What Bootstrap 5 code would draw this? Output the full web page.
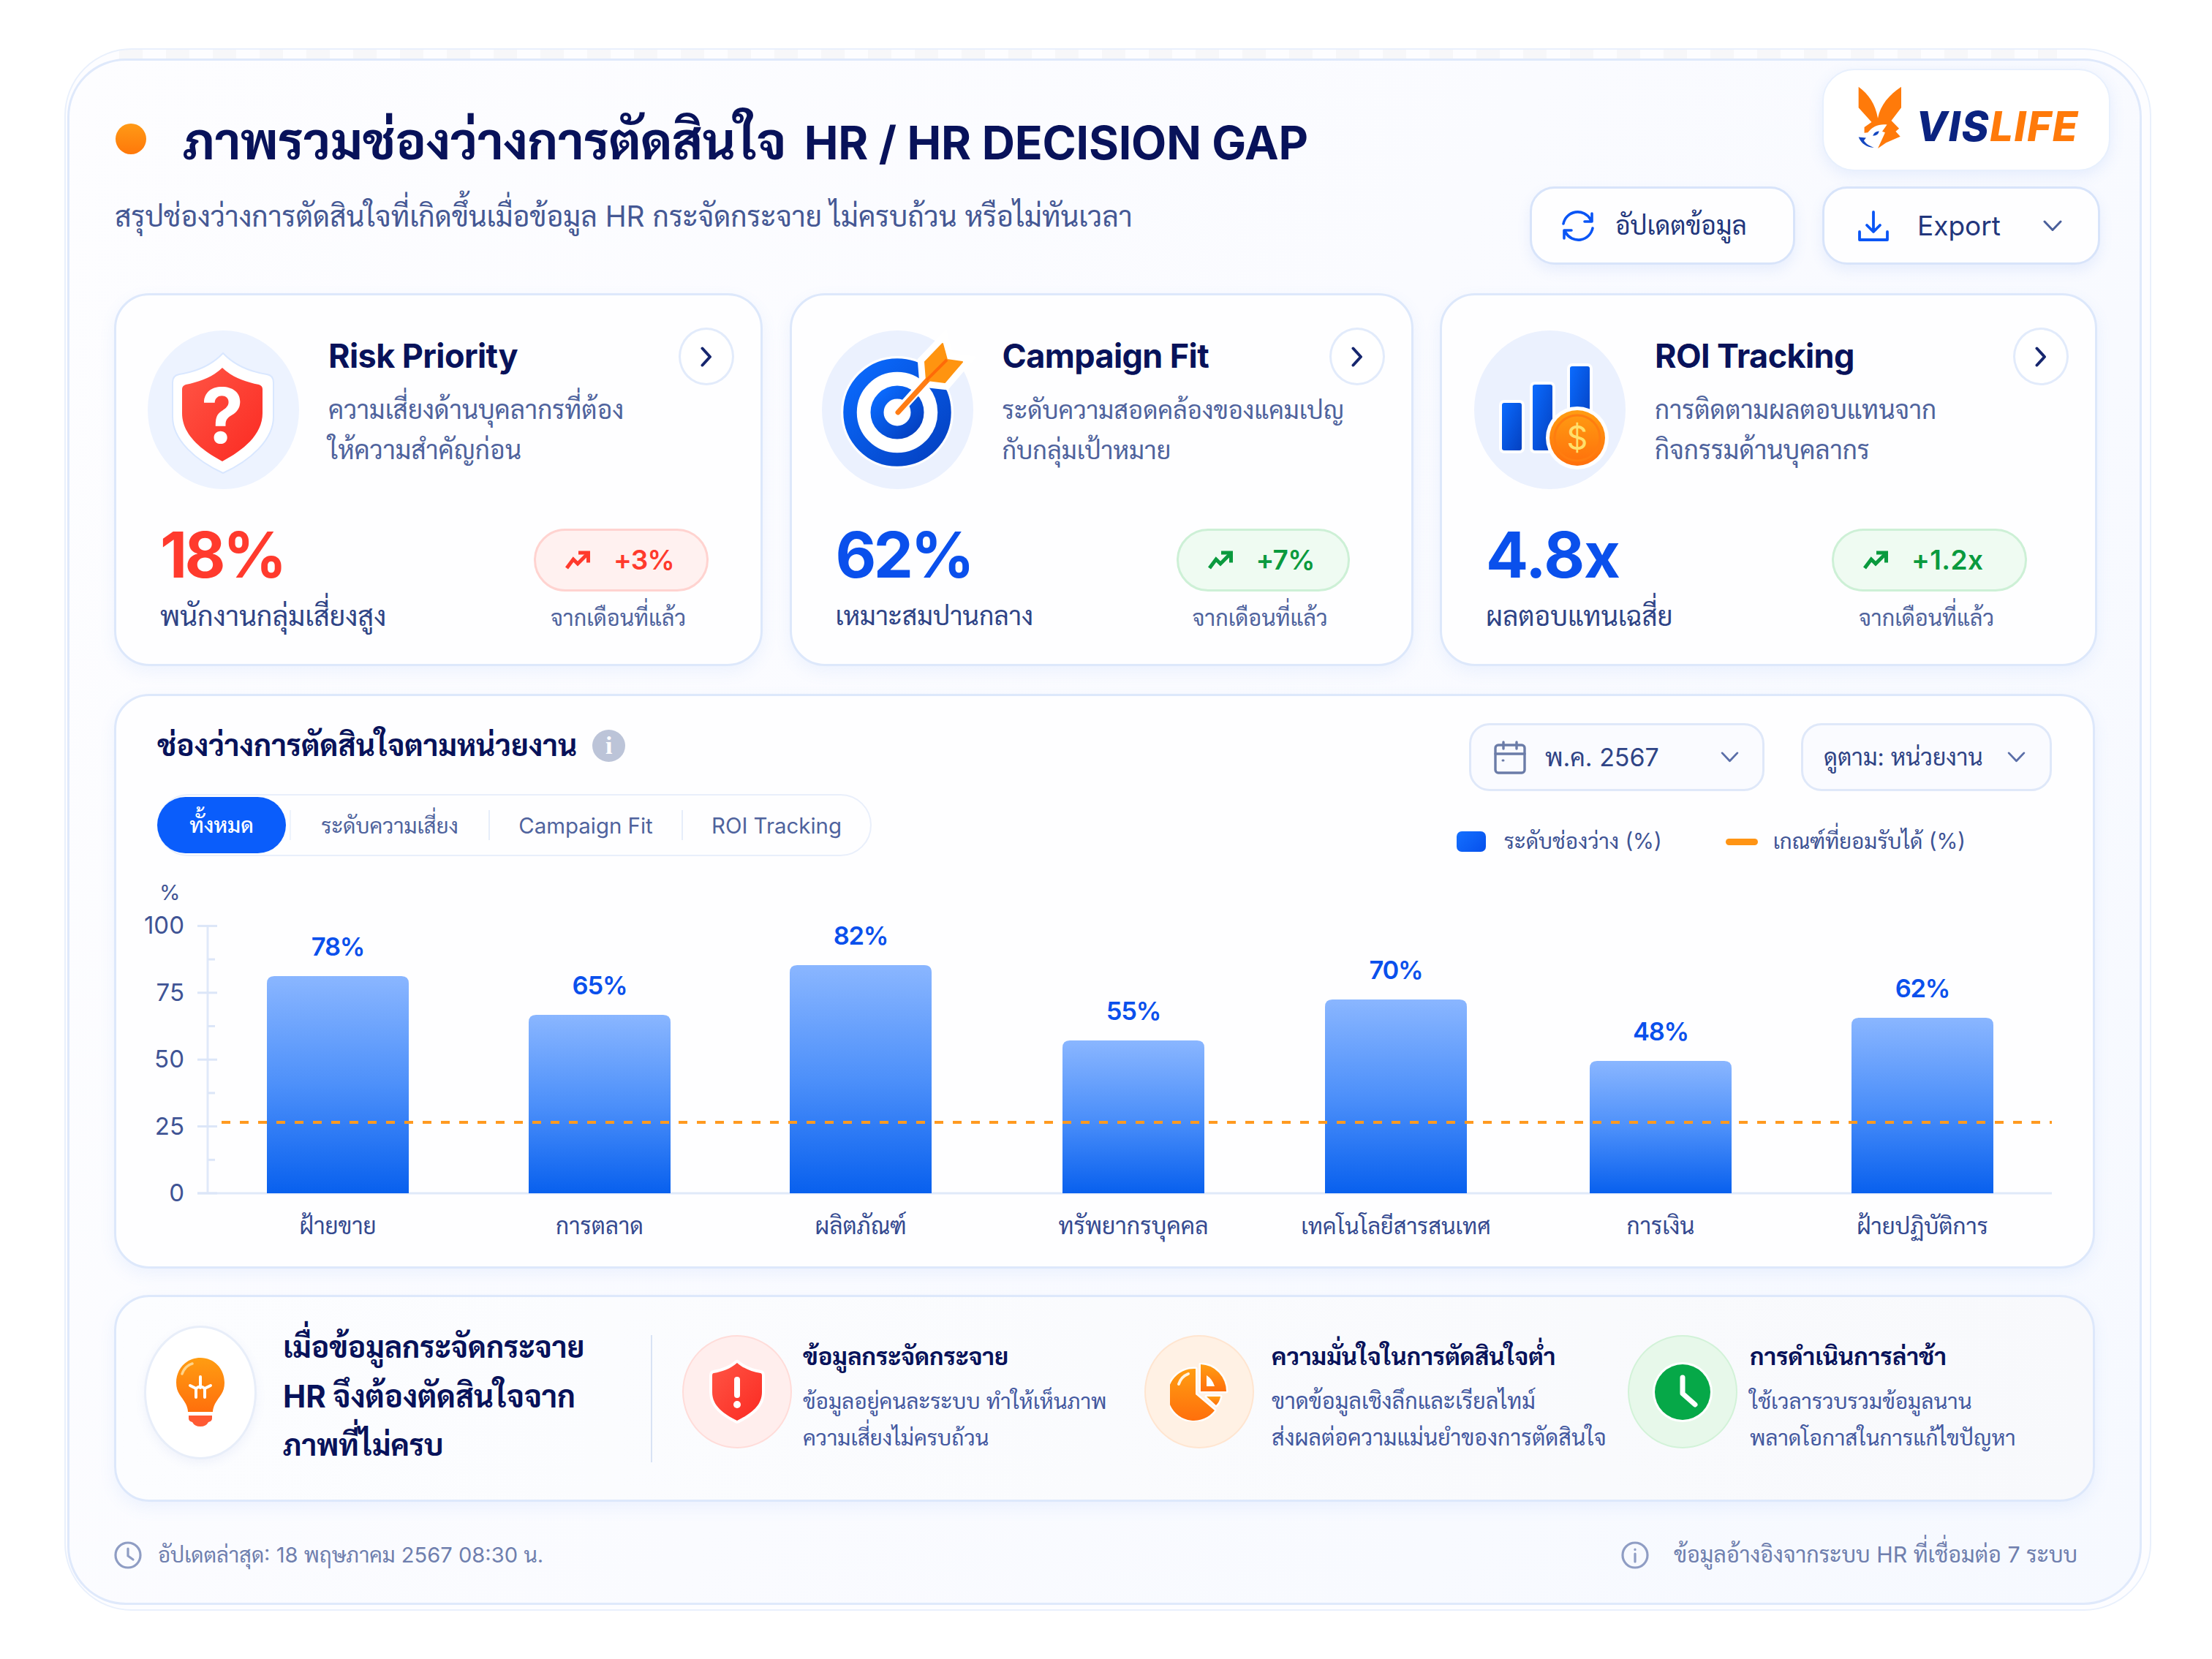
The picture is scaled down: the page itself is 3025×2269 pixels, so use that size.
<!DOCTYPE html>
<html lang="th">

<head>
    <meta charset="UTF-8">
    <title>HR Decision Gap</title>
    <link href="https://cdn.jsdelivr.net/npm/bootstrap@5.3.0/dist/css/bootstrap.min.css" rel="stylesheet">
    <style>
        :root {
            --navy: #08125a;
            --ink: #2f4486;
            --soft: #4f639d;
            --line: #dde8fb;
            --blue: #0a50ec;
            --red: #ff3a2d;
            --green: #0a9a3e;
        }

        body {
            font-family: Inter, Sarabun, "Noto Sans", sans-serif;
            background: #fff;
            color: var(--ink);
            width: 3025px;
            height: 2269px;
            padding: 66px 83px 66px 88px;
            overflow: hidden;
        }

        .text-navy { color: var(--navy); }
        .text-blue { color: var(--blue); }
        .text-red { color: var(--red); }
        .text-nowrap-all, .text-nowrap-all * { white-space: nowrap; }

        /* Frame */
        .frame-outer {
            height: 2137px;
            border: 2px solid #e9f0fc;
            border-radius: 92px;
            padding: 12px 11px 6px 2px;
            background:
                repeating-linear-gradient(90deg, rgba(0, 0, 0, .025) 0 32px, transparent 32px 64px) 73px 0 / 2650px 13px no-repeat,
                #fdfdff;
        }

        .frame-inner {
            height: 100%;
            border: 3px solid #dfe9fb;
            border-radius: 80px;
            padding: 0 40px 0 61px;
            background: linear-gradient(120deg, #fdfdff 0%, #fafbff 50%, #f6f9ff 100%);
        }

        .box {
            background: #fefeff;
            border: 3px solid var(--line);
            border-radius: 48px;
            box-shadow: 0 8px 22px rgba(90, 140, 240, .09);
        }

        /* Header */
        .page-head { height: 318px; }
        .head-left { padding-top: 70px; }
        .head-title { height: 80px; line-height: 80px; font-size: 62.6px; letter-spacing: -.2px; gap: 25px; }
        .head-title .thai { font-size: 69.7px; }
        .title-dot { width: 42px; height: 42px; margin: -6px 50px 0 2px; background: linear-gradient(#ff9a16, #ff780a); }
        .head-sub { margin-top: 33px; margin-left: 1px; line-height: 60px; font-size: 38.9px; color: #455894; }

        .logo-box { width: 394px; height: 140px; border-radius: 44px; margin-top: 11px; padding: 22px 0 0 47px; border: 2px solid #e8f0fd; background: #fff; box-shadow: 0 6px 20px rgba(90, 140, 240, .12); }
        .logo-word { font-size: 56px; font-weight: 800; font-style: italic; line-height: 60px; margin: 25px 0 0 19px; letter-spacing: 1.7px; color: #0b2380; }
        .logo-word span { color: #ff7a0a; }

        .head-btns { margin: 21px 14px 0 0; gap: 37px; }
        .head-btn { height: 107px; border: 3px solid #d8e4fa; border-radius: 34px; background: #fefeff; color: #22367c; box-shadow: 0 8px 18px rgba(90, 140, 240, .11); padding: 0; }
        .head-btn.refresh { width: 363px; font-size: 35.1px; padding-left: 40px; gap: 28px; }
        .head-btn.export { width: 380px; font-size: 37px; padding-left: 46px; }
        .head-btn.export span { width: 172px; text-align: left; margin-left: 39px; }

        /* Metric cards */
        .metrics { display: grid; grid-template-columns: 887px 853px 899px; gap: 36.5px; height: 510px; }
        .metric-top { height: 315px; padding: 48px 36px 0 43px; }
        .metric-text { margin-left: 40px; }
        .metric-name { font-size: 45px; font-weight: 650; line-height: 60px; margin-top: 5px; letter-spacing: -.6px; }
        .metric-desc { font-size: 35.1px; line-height: 55px; margin-top: 16px; color: var(--soft); }
        .desc-tight { font-size: 34.2px; }
        .go-btn { width: 76px; height: 79px; border: 3px solid #e2ebfb; margin-top: -4px; background: #fff; border-radius: 50%; }
        .metric-low { padding: 0 71px 0 60px; }
        .metric-val { font-size: 86px; font-weight: 650; line-height: 80px; letter-spacing: -3.5px; }
        .metric-label { font-size: 37px; line-height: 50px; margin-top: 19px; }
        .trend { height: 86px; border-radius: 43px; border: 3px solid; font-size: 37px; font-weight: 600; letter-spacing: -.8px; padding-left: 39px; gap: 31px; margin-top: 4px; }
        .trend-up { color: var(--green); background: #effbf2; border-color: #cdf0d6; }
        .trend-bad { color: var(--red); background: #fff1f0; border-color: #ffd3d0; }
        .trend-note { font-size: 30.5px; line-height: 50px; margin-top: 11px; margin-right: 8px; color: var(--soft); }

        /* Chart panel */
        .chart-box { height: 786px; margin-top: 38px; width: 2709px; }
        .chart-head { height: 248px; padding: 0 56px 0 56px; }
        .chart-title { font-size: 40.5px; font-weight: 700; line-height: 60px; margin-top: 38px; }
        .info-dot { width: 45px; height: 44px; margin: 34px 0 0 21px; background: #bcc4d8; color: #fff; font: 700 34px/44px "Liberation Serif", serif; }
        .tabs { display: inline-grid; grid-template-columns: 179px 272px 264px 258px; height: 85px; margin-top: 36px; border: 2px solid #e9effb; border-radius: 43px; font-size: 29.4px; color: var(--soft); }
        .tabs > div { height: 41px; margin-top: 20px; line-height: 43px; text-align: center; border-left: 2px solid #e6edfa; }
        .tabs > .tab-on { height: 77px; line-height: 77px; margin: 2px 5px 0 -2px; border: 0; border-radius: 39px; color: #fff; background: #0a5dfb; font-weight: 500; }
        .tabs > .tab-on + div { border-left-color: #eef3fc; }

        .filters { gap: 50px; margin-top: 37px; }
        .filter { height: 93px; border: 3px solid #dfe8f9; border-radius: 28px; background: #fafbff; color: #2f4486; }
        .filter.month { width: 404px; font-size: 34px; padding: 0 32px 0 31px; }
        .filter.unit { width: 343px; font-size: 32px; padding: 0 33px 0 28px; }
        .legend { font-size: 29.4px; margin: 45px 118px 0 0; line-height: 48px; color: #3f5495; }
        .key-bar { width: 40px; height: 28px; border-radius: 7px; margin-right: 25px; background: linear-gradient(135deg, #1470ff, #0650ec); }
        .key-line { width: 44px; height: 9px; border-radius: 5px; margin: 0 21px 0 87px; background: #ff9414; }
        .chart-svg { display: block; }

        /* Insight strip */
        .insight { height: 283px; margin-top: 36px; width: 2709px; background: linear-gradient(90deg, #fcfdff, #f8f9fc); display: grid; grid-template-columns: 774px 632px 661px 1fr; }
        .insight-main { padding-right: 41px; }
        .bulb { width: 154px; height: 183px; border: 3px solid #e8eef9; border-radius: 50%; background: #fff; margin: 39px 36px 0 38px; box-shadow: 0 5px 14px rgba(90, 120, 200, .08); }
        .insight-lead { font-size: 40.600px; font-weight: 700; line-height: 66.5px; padding-top: 36px; }
        .insight-lead .wide { font-size: 41.800px; }
        .insight-rule { width: 2px; height: 174px; background: #d9e3f5; margin: 52px 0 0 auto; }
        .point-icon { width: 150px; height: 155px; border-radius: 50%; border: 2px solid; margin-top: 52px; margin-right: 15px; }
        .ic-red { background: #ffeeed; border-color: #ffdcd9; }
        .ic-orange { background: #fff1e4; border-color: #ffe5d0; margin-right: 24px; }
        .ic-green { background: #e7f8ea; border-color: #d2f2d8; margin-right: 17px; }
        .point-title { font-size: 32.7px; font-weight: 700; line-height: 60px; margin-top: 51px; }
        .point-text { font-size: 29.6px; line-height: 50px; margin-top: 6px; color: #4459a0; }
        .point-text.wide { font-size: 30.4px; }

        .page-foot { margin-top: 43px; height: 60px; font-size: 29.1px; color: #6f7fae; padding-right: 45px; }
        .page-foot .left { gap: 22px; }
        .page-foot .right { font-size: 30.3px; gap: 34px; }

        svg { flex: none; }
        svg text { font-family: Inter, Sarabun, "Noto Sans", sans-serif; }
    </style>
</head>

<body>
    <!-- Gradients and symbols shared by the icons -->
    <svg width="0" height="0" class="position-absolute">
        <defs>
            <linearGradient id="gRed" x1="0" y1="0" x2="1" y2="1">
                <stop offset="0" stop-color="#ff5545" />
                <stop offset="1" stop-color="#fb2a22" />
            </linearGradient>
            <linearGradient id="gBlue" x1="0" y1="0" x2="1" y2="1">
                <stop offset="0" stop-color="#0a6bff" />
                <stop offset="1" stop-color="#0440c0" />
            </linearGradient>
            <linearGradient id="gOrange" x1="0" y1="0" x2="0" y2="1">
                <stop offset="0" stop-color="#ff9d12" />
                <stop offset="1" stop-color="#ff6f0c" />
            </linearGradient>
            <linearGradient id="gBar" x1="0" y1="0" x2="0" y2="1">
                <stop offset="0" stop-color="#8ab6ff" />
                <stop offset=".5" stop-color="#4d90fa" />
                <stop offset="1" stop-color="#0860ee" />
            </linearGradient>
        </defs>
        <symbol id="trend" viewBox="0 0 36 28">
            <path d="M3 25l9-12 6 6L32 5" fill="none" stroke="currentColor" stroke-width="5" />
            <path d="M19 4h13.500v13.500" fill="none" stroke="currentColor" stroke-width="5" />
        </symbol>
        <symbol id="down" viewBox="0 0 26 16">
            <path d="M2 2l11 11.500L24 2" fill="none" stroke="currentColor" stroke-width="3" stroke-linecap="round" stroke-linejoin="round" />
        </symbol>
        <symbol id="next" viewBox="0 0 16 28">
            <path d="M2.500 2.500L13 14 2.500 25.500" fill="none" stroke="#16266e" stroke-width="4" stroke-linecap="round" stroke-linejoin="round" />
        </symbol>
    </svg>

    <div class="frame-outer text-nowrap-all">
        <div class="frame-inner">

            <!-- Header -->
            <header class="page-head d-flex justify-content-between">
                <div class="head-left">
                    <div class="d-flex align-items-center">
                        <div class="title-dot rounded-circle"></div>
                        <h1 class="head-title fw-bold text-navy mb-0 d-flex align-items-baseline">
                            <span class="thai">ภาพรวมช่องว่างการตัดสินใจ</span>
                            <span>HR / HR DECISION GAP</span>
                        </h1>
                    </div>
                    <p class="head-sub mb-0">สรุปช่องว่างการตัดสินใจที่เกิดขึ้นเมื่อข้อมูล HR กระจัดกระจาย ไม่ครบถ้วน หรือไม่ทันเวลา</p>
                </div>
                <div class="d-flex flex-column align-items-end">
                    <div class="logo-box d-flex align-items-start">
                        <svg width="60" height="86" viewBox="36 38 182 256" preserveAspectRatio="none">
                            <path fill="#ff7a0a" d="M38 40C80 70 108 110 118 168 128 115 165 72 215 40V125L174 178 206 210 192 222 211 243 152 268 118 291 142 240 148 226 136 222 156 194C120 190 96 204 86 216L76 226 62 228V205L92 184 38 125Z" />
                            <path fill="#1447c0" d="M38 245L69 248 60 259C68 272 84 281 102 288 70 286 50 272 38 245Z" />
                            <path fill="#1447c0" d="M97 240Q102 222 123 220 121 238 97 240Z" />
                        </svg>
                        <div class="logo-word">VIS<span>LIFE</span></div>
                    </div>
                    <div class="head-btns d-flex">
                        <button type="button" class="btn head-btn refresh d-flex align-items-center">
                            <svg width="46" height="46" viewBox="0 0 46 46" fill="none" stroke="#0a55f5" stroke-width="3.600" stroke-linecap="round" stroke-linejoin="round">
                                <path d="M3 20A20 20 0 0 1 40 14M42 6v11H32" />
                                <path d="M43 26A20 20 0 0 1 6 32M4 40V29h10" />
                            </svg>
                            <span>อัปเดตข้อมูล</span>
                        </button>
                        <button type="button" class="btn head-btn export d-flex align-items-center">
                            <svg width="42" height="42" viewBox="0 0 42 42" fill="none" stroke="#0a55f5" stroke-width="3.800" stroke-linecap="round" stroke-linejoin="round">
                                <path d="M21 2v26M12 20l9 9 9-9M2 29v11h38V29" />
                            </svg>
                            <span>Export</span>
                            <svg width="26" height="16" color="#4a5f9b"><use href="#down" /></svg>
                        </button>
                    </div>
                </div>
            </header>

            <!-- Metric cards -->
            <section class="metrics">
                <div class="box">
                    <div class="metric-top d-flex">
                        <svg width="207" height="217" viewBox="0 0 207 217">
                            <ellipse cx="103.500" cy="108.500" rx="103.500" ry="108.500" fill="#edf3ff" />
                            <path fill="#fff" stroke="#d9e7ff" stroke-width="2" d="M103 31C88 47 68 56 43 60 37 61 34 65 34 71V118C34 150 66 178 103 195 140 178 172 150 172 118V71C172 65 169 61 163 60 138 56 118 47 103 31Z" />
                            <path fill="url(#gRed)" d="M102 51C88 64 72 70 52 74 49 75 47 77 47 80V113C47 143 74 164 102 179 130 164 157 143 157 113V80C157 77 155 75 152 74 132 70 116 64 102 51Z" />
                            <text x="102" y="154" font-size="104" font-weight="700" fill="#fff" text-anchor="middle">?</text>
                        </svg>
                        <div class="metric-text flex-grow-1">
                            <h2 class="metric-name text-navy mb-0">Risk Priority</h2>
                            <p class="metric-desc mb-0">ความเสี่ยงด้านบุคลากรที่ต้อง<br>ให้ความสำคัญก่อน</p>
                        </div>
                        <a class="go-btn d-flex align-items-center justify-content-center"><svg width="16" height="28"><use href="#next" /></svg></a>
                    </div>
                    <div class="metric-low d-flex justify-content-between">
                        <div>
                            <div class="metric-val text-red">18%</div>
                            <div class="metric-label" style="font-size: 37.6px">พนักงานกลุ่มเสี่ยงสูง</div>
                        </div>
                        <div class="text-center">
                            <div class="trend trend-bad d-flex align-items-center" style="width: 239px"><svg width="36" height="28"><use href="#trend" /></svg>+3%</div>
                            <div class="trend-note">จากเดือนที่แล้ว</div>
                        </div>
                    </div>
                </div>

                <div class="box">
                    <div class="metric-top d-flex" style="padding-left: 41px">
                        <svg width="207" height="217" viewBox="0 0 207 217" overflow="visible">
                            <ellipse cx="103.500" cy="108.500" rx="103.500" ry="108.500" fill="#ebf1fe" />
                            <circle cx="103" cy="112" r="77" fill="#fff" />
                            <circle cx="103" cy="112" r="64.500" fill="none" stroke="url(#gBlue)" stroke-width="18.500" />
                            <circle cx="103" cy="112" r="27.500" fill="none" stroke="url(#gBlue)" stroke-width="18" />
                            <path d="M105 110L150 60" stroke="#fff" stroke-width="13" />
                            <path d="M165 18L171 40 192 43 168 71 143 68 141 43Z" fill="#fff" stroke="#fff" stroke-width="20" />
                            <path d="M104 112L156 55" stroke="#ff7d14" stroke-width="7" stroke-linecap="round" />
                            <path d="M165 18L171 40 192 43 168 71 143 68 141 43Z" fill="#ff9410" stroke="#ff9410" stroke-width="2" stroke-linejoin="round" />
                            <path d="M143 68L171 40" stroke="#ff6a08" stroke-width="4" />
                        </svg>
                        <div class="metric-text flex-grow-1">
                            <h2 class="metric-name text-navy mb-0">Campaign Fit</h2>
                            <p class="metric-desc desc-tight mb-0">ระดับความสอดคล้องของแคมเปญ<br>กับกลุ่มเป้าหมาย</p>
                        </div>
                        <a class="go-btn d-flex align-items-center justify-content-center ms-n5" style="margin-left: -40px"><svg width="16" height="28"><use href="#next" /></svg></a>
                    </div>
                    <div class="metric-low d-flex justify-content-between" style="padding-right: 84px">
                        <div>
                            <div class="metric-val text-blue">62%</div>
                            <div class="metric-label" style="font-size: 35.4px">เหมาะสมปานกลาง</div>
                        </div>
                        <div class="text-center">
                            <div class="trend trend-up d-flex align-items-center" style="width: 237px"><svg width="36" height="28"><use href="#trend" /></svg>+7%</div>
                            <div class="trend-note">จากเดือนที่แล้ว</div>
                        </div>
                    </div>
                </div>

                <div class="box">
                    <div class="metric-top d-flex" style="padding-left: 44px">
                        <svg width="207" height="217" viewBox="0 0 207 217">
                            <ellipse cx="103.500" cy="108.500" rx="103.500" ry="108.500" fill="#ebf1fe" />
                            <g fill="url(#gBlue)" stroke="#fff" stroke-width="8" paint-order="stroke" stroke-linejoin="round">
                                <rect x="38" y="99" width="27" height="65" rx="3" />
                                <rect x="80" y="74" width="27" height="90" rx="3" />
                                <rect x="131" y="49" width="27" height="90" rx="3" />
                            </g>
                            <circle cx="141" cy="147" r="43" fill="#fff" />
                            <circle cx="141" cy="147" r="38" fill="url(#gOrange)" />
                            <circle cx="141" cy="147" r="31" fill="none" stroke="#ff7d10" stroke-width="3" />
                            <text x="141" y="163" font-size="45" fill="#ffdf6b" text-anchor="middle">$</text>
                        </svg>
                        <div class="metric-text flex-grow-1">
                            <h2 class="metric-name text-navy mb-0">ROI Tracking</h2>
                            <p class="metric-desc mb-0">การติดตามผลตอบแทนจาก<br>กิจกรรมด้านบุคลากร</p>
                        </div>
                        <a class="go-btn d-flex align-items-center justify-content-center"><svg width="16" height="28"><use href="#next" /></svg></a>
                    </div>
                    <div class="metric-low d-flex justify-content-between" style="padding-right: 93px">
                        <div>
                            <div class="metric-val text-blue" style="letter-spacing: -1.2px">4.8x</div>
                            <div class="metric-label" style="font-size: 36.8px">ผลตอบแทนเฉสี่ย</div>
                        </div>
                        <div class="text-center">
                            <div class="trend trend-up d-flex align-items-center" style="width: 267px; letter-spacing: .4px"><svg width="36" height="28"><use href="#trend" /></svg>+1.2x</div>
                            <div class="trend-note">จากเดือนที่แล้ว</div>
                        </div>
                    </div>
                </div>
            </section>

            <!-- Chart -->
            <section class="box chart-box">
                <div class="chart-head d-flex justify-content-between">
                    <div>
                        <div class="d-flex">
                            <h2 class="chart-title text-navy mb-0">ช่องว่างการตัดสินใจตามหน่วยงาน</h2>
                            <span class="info-dot rounded-circle text-center mt-auto mb-2">i</span>
                        </div>
                        <div class="tabs">
                            <div class="tab-on">ทั้งหมด</div>
                            <div>ระดับความเสี่ยง</div>
                            <div>Campaign Fit</div>
                            <div>ROI Tracking</div>
                        </div>
                    </div>
                    <div>
                        <div class="filters d-flex justify-content-end">
                            <div class="filter month d-flex align-items-center">
                                <svg width="44" height="46" viewBox="0 0 44 46" fill="none" stroke="#6b7ca8" stroke-width="3.400" stroke-linecap="round">
                                    <rect x="2" y="6" width="40" height="38" rx="4" />
                                    <path d="M2 18h40M13 2v9M31 2v9" />
                                    <path d="M12 27h1" stroke-width="3" />
                                </svg>
                                <span class="flex-grow-1" style="margin-left: 26px">พ.ค. 2567</span>
                                <svg width="25" height="15" color="#5a6ea8"><use href="#down" /></svg>
                            </div>
                            <div class="filter unit d-flex align-items-center justify-content-between">
                                <span>ดูตาม: หน่วยงาน</span>
                                <svg width="25" height="15" color="#5a6ea8"><use href="#down" /></svg>
                            </div>
                        </div>
                        <div class="legend d-flex align-items-center justify-content-end">
                            <span class="key-bar"></span>ระดับช่องว่าง (%)
                            <span class="key-line"></span>เกณฑ์ที่ยอมรับได้ (%)
                        </div>
                    </div>
                </div>
                <svg id="chart" class="chart-svg" width="2703" height="531" viewBox="0 0 2703 531"></svg>
            </section>

            <!-- Insight strip -->
            <section class="box insight">
                <div class="insight-main d-flex">
                    <div class="bulb d-flex align-items-center justify-content-center">
                        <svg width="68" height="96" viewBox="0 0 68 96">
                            <path fill="url(#gOrange)" d="M34 0C53 0 67 15 67 34 67 48 60 52 54 63 52 67 51 71 51 74H17C17 71 16 67 14 63 8 52 1 48 1 34 1 15 15 0 34 0Z" />
                            <path d="M9 22Q13 11 23 8" fill="none" stroke="#ffd48a" stroke-width="3.500" stroke-linecap="round" />
                            <path d="M34 26v15M20 38l8 4v12M48 38l-8 4v12M28 42q6-5 12 0" fill="none" stroke="#fff" stroke-width="4" stroke-linecap="round" />
                            <path fill="#ff5a33" d="M18 79H50V83Q50 87 45 88 42 94 34 94 26 94 23 88 18 87 18 83Z" />
                        </svg>
                    </div>
                    <div class="insight-lead text-navy">เมื่อข้อมูลกระจัดกระจาย<br><span class="wide">HR จึงต้องตัดสินใจจาก</span><br>ภาพที่ไม่ครบ</div>
                    <div class="insight-rule"></div>
                </div>
                <div class="d-flex">
                    <div class="point-icon ic-red d-flex align-items-center justify-content-center">
                        <svg width="80" height="90" viewBox="0 0 80 90">
                            <path fill="url(#gRed)" stroke="#fff" stroke-width="8" paint-order="stroke" stroke-linejoin="round" d="M40 5C31 13 20 17 8 19 7 19 6 20 6 22V45C6 64 22 75 40 84 58 75 74 64 74 45V22C74 20 73 19 72 19 60 17 49 13 40 5Z" />
                            <path d="M40 28v21" stroke="#fff" stroke-width="8" stroke-linecap="round" />
                            <circle cx="40" cy="62" r="5" fill="#fff" />
                        </svg>
                    </div>
                    <div>
                        <div class="point-title text-navy">ข้อมูลกระจัดกระจาย</div>
                        <div class="point-text">ข้อมูลอยู่คนละระบบ ทำให้เห็นภาพ<br>ความเสี่ยงไม่ครบถ้วน</div>
                    </div>
                </div>
                <div class="d-flex">
                    <div class="point-icon ic-orange d-flex align-items-center justify-content-center">
                        <svg width="80" height="80" viewBox="0 0 80 80">
                            <g fill="url(#gOrange)" stroke="#fff" stroke-width="5" paint-order="stroke" stroke-linejoin="round">
                                <path d="M35 8A35.500 35.500 0 1 0 61 65L35 43Z" />
                                <path d="M50 46H69Q68 53 63 58Z" />
                                <path d="M42 39V2A36 37 0 0 1 77 39Z" />
                            </g>
                            <path fill="#fff" d="M50 17Q58 22 61 32H50Z" />
                            <path d="M12 29Q15 19 25 15" fill="none" stroke="#fff3df" stroke-width="4" stroke-linecap="round" />
                        </svg>
                    </div>
                    <div>
                        <div class="point-title text-navy">ความมั่นใจในการตัดสินใจต่ำ</div>
                        <div class="point-text wide">ขาดข้อมูลเชิงลึกและเรียลไทม์<br>ส่งผลต่อความแม่นยำของการตัดสินใจ</div>
                    </div>
                </div>
                <div class="d-flex">
                    <div class="point-icon ic-green d-flex align-items-center justify-content-center">
                        <svg width="82" height="82" viewBox="-3 -3 82 82">
                            <circle cx="38" cy="38" r="41" fill="#fff" />
                            <circle cx="38" cy="38" r="38" fill="#06a848" />
                            <path d="M38 18v22l17 15" fill="none" stroke="#fff" stroke-width="7" stroke-linecap="round" stroke-linejoin="round" />
                        </svg>
                    </div>
                    <div>
                        <div class="point-title text-navy">การดำเนินการล่าช้า</div>
                        <div class="point-text">ใช้เวลารวบรวมข้อมูลนาน<br>พลาดโอกาสในการแก้ไขปัญหา</div>
                    </div>
                </div>
            </section>

            <!-- Footer -->
            <footer class="page-foot d-flex align-items-center justify-content-between">
                <div class="left d-flex align-items-center">
                    <svg width="38" height="38" viewBox="0 0 38 38" fill="none" stroke="#8f9dc4" stroke-width="3.200" stroke-linecap="round">
                        <circle cx="19" cy="19" r="17" />
                        <path d="M19 10v10l7 5" />
                    </svg>
                    <span>อัปเดตล่าสุด: 18 พฤษภาคม 2567 08:30 น.</span>
                </div>
                <div class="right d-flex align-items-center">
                    <svg width="38" height="38" viewBox="0 0 38 38" fill="none" stroke="#8f9dc4" stroke-width="3.200" stroke-linecap="round">
                        <circle cx="19" cy="19" r="17" />
                        <path d="M19 17v11M19 11v.5" />
                    </svg>
                    <span>ข้อมูลอ้างอิงจากระบบ HR ที่เชื่อมต่อ 7 ระบบ</span>
                </div>
            </footer>
        </div>
    </div>

    <script src="https://cdn.jsdelivr.net/npm/bootstrap@5.3.0/dist/js/bootstrap.bundle.min.js"></script>
    <script>
        // x = centre of the bar, h = drawn height, fs = size of the axis label
        const bars = [
            { name: 'ฝ้ายขาย', value: 78, x: 303, h: 297, fs: 31.5 },
            { name: 'การตลาด', value: 65, x: 661, h: 244, fs: 31.5 },
            { name: 'ผลิตภัณฑ์', value: 82, x: 1018, h: 312, fs: 31.5 },
            { name: 'ทรัพยากรบุคคล', value: 55, x: 1391, h: 209, fs: 32 },
            { name: 'เทคโนโลยีสารสนเทศ', value: 70, x: 1750, h: 265, fs: 30.7 },
            { name: 'การเงิน', value: 48, x: 2112, h: 181, fs: 31.5 },
            { name: 'ฝ้ายปฏิบัติการ', value: 62, x: 2470, h: 240, fs: 31.3 }
        ];
        const base = 432;
        const step = 91.4;
        let out = '<text x="59" y="31" font-size="29" fill="#3f5495">%</text>';

        // axis
        out += `<path d="M125 ${base - step * 4}V${base}M111 ${base}H2647" fill="none" stroke="#e0e9f9" stroke-width="3"/>`;
        for (let i = 0; i <= 4; i++) {
            const y = base - step * i;
            out += `<path d="M111 ${y}h27" stroke="#dce6f8" stroke-width="3"/>`;
            if (i < 4) out += `<path d="M125 ${y - step / 2}h10" stroke="#dce6f8" stroke-width="3"/>`;
            out += `<text x="93" y="${y + 11}" font-size="33" text-anchor="end" fill="#3f5495">${i * 25}</text>`;
        }

        // bars
        bars.forEach(b => {
            const x = b.x - 97, y = base - b.h;
            out += `<path d="M${x} ${base}V${y + 10}q0 -10 10 -10h174q10 0 10 10V${base}z" fill="url(#gBar)"/>`;
            out += `<text x="${b.x}" y="${y - 28}" font-size="34.5" font-weight="600" letter-spacing="-1.2" text-anchor="middle" fill="#0a50ec">${b.value}%</text>`;
            out += `<text x="${b.x}" y="488" font-size="${b.fs}" text-anchor="middle" fill="#354a90">${b.name}</text>`;
        });

        out += '<path d="M144 335H2647" stroke="#ff9a20" stroke-width="4" stroke-dasharray="12 13"/>';
        document.getElementById('chart').innerHTML = out;
    </script>
</body>

</html>
